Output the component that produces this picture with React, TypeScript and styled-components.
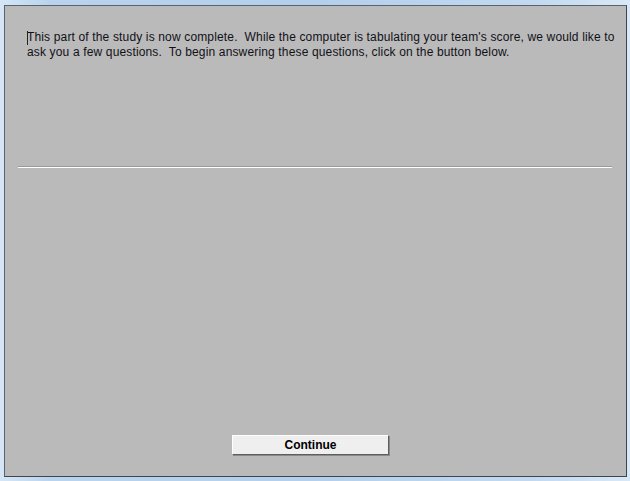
import React from "react";
import styled, { createGlobalStyle } from "styled-components";

const Global = createGlobalStyle`
  html, body { margin: 0; padding: 0; }
  body {
    width: 630px;
    height: 481px;
    overflow: hidden;
    background: linear-gradient(90deg, #d6e6f6 0%, #b9d3ee 8%, #b4cfeb 50%, #c2d9f0 85%, #d9e8f6 100%);
    font-family: "Liberation Sans", Arial, sans-serif;
  }
`;

const Chrome = styled.div`
  width: 630px;
  height: 481px;
  box-sizing: border-box;
  padding: 5px 3px 4px 4px;
  display: flex;
`;

const Panel = styled.div`
  flex: 1;
  box-sizing: border-box;
  background: #bababa;
  border: 1px solid #59636f;
  border-right-color: #3d4650;
  border-bottom-color: #3d4650;
  display: flex;
  flex-direction: column;
`;

const MessageArea = styled.div`
  height: 160px;
  box-sizing: border-box;
  padding: 24px 8px 0 22px;
  position: relative;
`;

const Message = styled.p`
  margin: 0;
  font-family: "Liberation Sans", Arial, sans-serif;
  font-size: 12px;
  line-height: 15px;
  letter-spacing: 0.15px;
  color: #111118;
  white-space: pre-wrap;
`;

const Caret = styled.span`
  position: absolute;
  left: 22px;
  top: 25px;
  width: 1px;
  height: 14px;
  background: #222;
`;

const Separator = styled.div`
  margin: 0 14px 0 13px;
  height: 2px;
  border-top: 1px solid #9a9a9a;
  border-bottom: 1px solid #ffffff;
  box-sizing: border-box;
  background: #ffffff;
`;

const Body = styled.div`
  flex: 1;
  display: flex;
  align-items: flex-end;
  justify-content: center;
  padding-bottom: 21px;
`;

const Button = styled.button`
  width: 157px;
  height: 20px;
  box-sizing: border-box;
  margin-right: 10px;
  background: #efefef;
  border: 1px solid;
  border-color: #ffffff #5e5e5e #5e5e5e #ffffff;
  box-shadow: 1px 1px 0 #8a8a8a;
  font-family: "Liberation Sans", Arial, sans-serif;
  font-weight: bold;
  font-size: 12px;
  color: #000;
  padding: 0;
  cursor: default;
`;

export default function App() {
  return (
    <>
      <Global />
      <Chrome>
        <Panel>
          <MessageArea>
            <Caret />
            <Message>
              {"This part of the study is now complete.  While the computer is tabulating your team's score, we would like to ask you a few questions.  To begin answering these questions, click on the button below."}
            </Message>
          </MessageArea>
          <Separator />
          <Body>
            <Button>Continue</Button>
          </Body>
        </Panel>
      </Chrome>
    </>
  );
}
